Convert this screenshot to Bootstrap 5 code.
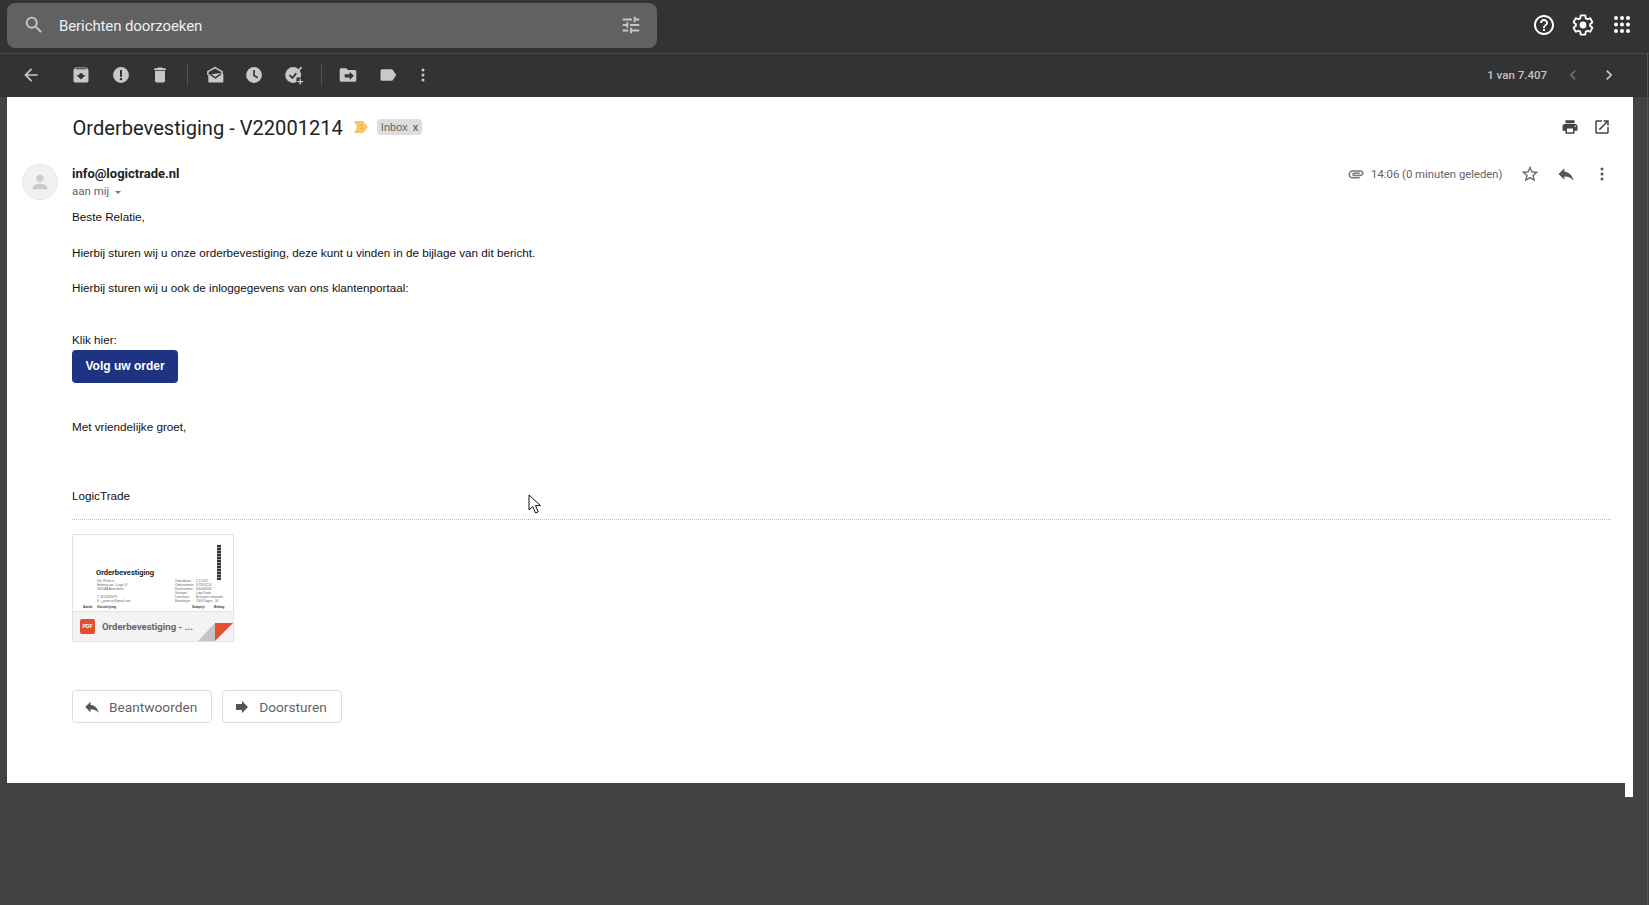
<!DOCTYPE html>
<html lang="nl">
<head>
  <meta charset="UTF-8" />
  <title>Orderbevestiging - V22001214</title>
  <link href="https://cdn.jsdelivr.net/npm/bootstrap@5.3.0/dist/css/bootstrap.min.css" rel="stylesheet"/>
  <style>
    html, body { height: 100%; }
    body {
      background: #424242;
      font-family: "Liberation Sans", Arial, sans-serif;
      overflow: hidden;
      height: 905px;
    }
    /* thin lighter edge on the right of the window */
    body::after {
      content: "";
      position: fixed;
      top: 53px;
      right: 1px;
      bottom: 0;
      width: 1px;
      background: #555;
    }

    /* top bars */
    .top-head {
      height: 54px;
      background: #333;
      border-bottom: 1px solid #4a4a4a;
      padding: 3px 10px 6px 7px;
    }
    .search-box {
      width: 650px;
      height: 45px;
      background: #616161;
      border-radius: 8px;
      padding: 0 7px 0 16px;
      color: #eee;
      font: 15px/45px Roboto, sans-serif;
    }
    .search-text { margin-left: 14px; padding-top: 2px; letter-spacing: -.1px; }
    .head-icons { gap: 15px; padding-right: 5px; }
    .tool-bar {
      height: 43px;
      background: #333;
      padding: 0 30px 2px 11px;
    }
    .tool-slot { width: 39.5px; height: 38px; flex: none; }
    .back-slot { margin-right: 11px; }
    .more-slot { margin-left: -4px; }
    .tool-sep { width: 1px; height: 20px; background: #555; flex: none; margin: 0 8px 0 7px; }
    .tool-sep + .tool-slot { margin-left: -1px; }
    .pager { color: #c4c4c4; font: 500 11.5px Roboto, sans-serif; }
    .pager-arrows { gap: 16px; margin-left: 16px; }
    .ico-light { fill: #c8c8c8; }
    .ico-white { fill: #fff; }
    .ico-dark { fill: #444; }
    .ico-mid { fill: #555; }

    /* mail panel */
    .mail-panel {
      position: relative;
      width: 1626px;
      height: 686px;
      margin-left: 7px;
      background: #fff;
      color: #202124;
    }
    .mail-panel::after {
      content: "";
      position: absolute;
      right: 0;
      top: 100%;
      width: 8px;
      height: 14px;
      background: #fff;
    }
    .subject-row { height: 60px; padding: 0 22px 0 65.5px; }
    .subject-text { font: 400 20.1px Roboto, sans-serif; margin: 0; padding-top: 2px; color: #222; }
    .marker { margin: 0 9px 0 11px; }
    .inbox-tag {
      background: #ddd;
      color: #666;
      border-radius: 4px;
      font: 11px/16px "Liberation Sans", sans-serif;
      padding: 0 4px;
    }
    .tag-close { color: #444; margin-left: 2px; }
    .subject-tools { gap: 14px; }
    .sender-row { height: 50px; padding: 0 13.5px 0 15px; }
    .avatar-round {
      width: 36px;
      height: 36px;
      border-radius: 50%;
      background: #f1f1f1;
      border: 1px solid #e8e8e8;
      margin-right: 14px;
    }
    .sender-name { font: 700 13px/18px Roboto, sans-serif; color: #222; }
    .sender-to { font: 11.5px/16px Roboto, sans-serif; color: #5f6368; }
    .caret-down {
      display: inline-block;
      border: 3.5px solid transparent;
      border-top-color: #777;
      border-bottom: 0;
      margin-left: 3px;
      vertical-align: 1px;
    }
    .meta-date { font: 11.3px Roboto, sans-serif; color: #5f6368; margin: 0 9px 0 6px; }
    .meta-slot { width: 36px; text-align: center; }

    .mail-body { margin-left: 65px; margin-right: 22px; font-size: 11.7px; line-height: 17.75px; color: #111; padding-top: 1px; }
    .mail-body p { margin: 0 0 17.75px; }
    .mail-body .greet-line { margin: 35px 0 48px; }
    .sign-line { padding-top: 2.5px; }
    .order-btn {
      display: inline-block;
      margin-top: 2px;
      background: #1e3382;
      color: #fff;
      font-weight: 700;
      font-size: 12px;
      line-height: 33px;
      padding: 0 13.5px;
      border-radius: 4px;
      text-decoration: none;
    }
    .dot-line { border-top: 1px dotted #bbb; height: 0; margin-top: 15px; }

    /* attachment */
    .attach-card {
      position: relative;
      width: 162px;
      height: 108px;
      margin: 14px 0 0 65px;
      border: 1px solid #e3e3e3;
      background: #fff;
      overflow: hidden;
    }
    .thumb-title { position: absolute; left: 23px; top: 33px; font: 700 7.5px Roboto, sans-serif; color: #222; }
    .thumb-line { position: absolute; font: 3px/4px "Liberation Sans", sans-serif; color: #666; white-space: nowrap; }
    .thumb-addr { left: 24px; top: 44px; }
    .thumb-keys { left: 102px; top: 44px; }
    .thumb-vals { left: 123px; top: 44px; }
    .thumb-head { top: 70px; font-weight: 700; color: #333; }
    .col-qty { left: 10px; }
    .col-desc { left: 24px; }
    .col-price { left: 119px; }
    .col-sum { left: 141px; }
    .thumb-bar {
      position: absolute; left: 144px; top: 10px; width: 4px; height: 35px;
      background: repeating-linear-gradient(#333 0 2px, #999 2px 3px);
    }
    .attach-foot {
      position: absolute;
      left: 0; right: 0; bottom: 0;
      height: 30px;
      background: #f3f3f3;
      border-top: 1px solid #e3e3e3;
      padding-left: 7px;
      font: 700 9.6px/30px Roboto, sans-serif;
      color: #666;
    }
    .pdf-mark {
      width: 15px; height: 15px; background: #e34f33; border-radius: 2px; margin-right: 7px;
      color: #fff; font: 700 5px/15px "Liberation Sans", sans-serif; text-align: center;
    }
    .page-curl { position: absolute; right: 0; bottom: 0; }

    /* reply buttons */
    .reply-row { margin: 48px 0 0 65px; gap: 10px; }
    .reply-btn {
      height: 33px;
      border: 1px solid #dadce0;
      border-radius: 4px;
      background: #fff;
      color: #5f6368;
      font: 400 13.7px Roboto, sans-serif;
      padding: 0 14px 0 10px;
      gap: 8px;
    }
    .cursor-mark { position: absolute; left: 521px; top: 397px; }
  </style>
</head>
<body>

<div class="top-head d-flex align-items-center justify-content-between">
  <div class="search-box d-flex align-items-center">
    <svg class="ico-light" width="22" height="22" viewBox="0 0 24 24"><path d="M15.500 14h-.79l-.28-.27A6.471 6.471 0 0 0 16 9.500 6.500 6.500 0 1 0 9.500 16c1.610 0 3.090-.59 4.230-1.570l.27.28v.79l5 4.990L20.490 19l-4.990-5zm-6 0C7.010 14 5 11.990 5 9.500S7.010 5 9.500 5 14 7.010 14 9.500 11.990 14 9.500 14z"/></svg>
    <span class="search-text flex-grow-1">Berichten doorzoeken</span>
    <svg class="ico-light me-2" width="22" height="22" viewBox="0 0 24 24"><path d="M3 17v2h6v-2H3zM3 5v2h10V5H3zm10 16v-2h8v-2h-8v-2h-2v6h2zM7 9v2H3v2h4v2h2V9H7zm14 4v-2H11v2h10zm-6-4h2V7h4V5h-4V3h-2v6z"/></svg>
  </div>
  <div class="head-icons d-flex align-items-center">
    <svg class="ico-white" width="24" height="24" viewBox="0 0 24 24"><path d="M11 18h2v-2h-2v2zm1-16C6.480 2 2 6.480 2 12s4.480 10 10 10 10-4.480 10-10S17.520 2 12 2zm0 18c-4.410 0-8-3.590-8-8s3.590-8 8-8 8 3.590 8 8-3.590 8-8 8zm0-14c-2.210 0-4 1.790-4 4h2c0-1.100.9-2 2-2s2 .9 2 2c0 2-3 1.750-3 5h2c0-2.250 3-2.500 3-5 0-2.210-1.790-4-4-4z"/></svg>
    <svg width="24" height="24" viewBox="0 0 24 24"><path fill="none" stroke="#fff" stroke-width="1.900" d="M19.140 12.940c.04-.3.06-.61.06-.94 0-.32-.02-.64-.07-.94l2.030-1.580a.49.49 0 0 0 .12-.61l-1.920-3.320a.488.488 0 0 0-.59-.22l-2.390.96c-.5-.38-1.030-.7-1.620-.94l-.36-2.540a.484.484 0 0 0-.48-.41h-3.840c-.24 0-.43.17-.47.41l-.36 2.540c-.59.24-1.130.57-1.620.94l-2.390-.96c-.22-.08-.47 0-.59.22L2.740 8.870c-.12.21-.08.47.12.61l2.030 1.580c-.05.3-.09.63-.09.94s.02.64.07.94l-2.030 1.580a.49.49 0 0 0-.12.61l1.920 3.320c.12.22.37.29.59.22l2.390-.96c.5.38 1.030.7 1.620.94l.36 2.540c.05.24.24.41.48.41h3.840c.24 0 .44-.17.47-.41l.36-2.540c.59-.24 1.130-.56 1.620-.94l2.390.96c.22.08.47 0 .59-.22l1.920-3.320c.12-.22.07-.47-.12-.61l-2.010-1.580z"/><circle cx="12" cy="12" r="3.400" fill="#fff"/></svg>
    <svg class="ico-white" width="24" height="24" viewBox="0 0 24 24"><circle cx="6" cy="5" r="2"/><circle cx="12" cy="5" r="2"/><circle cx="18" cy="5" r="2"/><circle cx="6" cy="11.500" r="2"/><circle cx="12" cy="11.500" r="2"/><circle cx="18" cy="11.500" r="2"/><circle cx="6" cy="18" r="2"/><circle cx="12" cy="18" r="2"/><circle cx="18" cy="18" r="2"/></svg>
  </div>
</div>

<div class="tool-bar d-flex align-items-center">
  <div class="tool-slot back-slot d-flex align-items-center justify-content-center"><svg class="ico-light" width="20" height="20" viewBox="0 0 24 24"><path d="M20 11H7.830l5.590-5.590L12 4l-8 8 8 8 1.410-1.410L7.830 13H20v-2z"/></svg></div>
  <div class="tool-slot d-flex align-items-center justify-content-center"><svg class="ico-light" width="20" height="20" viewBox="0 0 24 24"><path d="M20.540 5.230l-1.390-1.680C18.880 3.210 18.470 3 18 3H6c-.47 0-.88.21-1.160.55L3.460 5.230C3.170 5.570 3 6.020 3 6.500V19c0 1.100.9 2 2 2h14c1.100 0 2-.9 2-2V6.500c0-.48-.17-.93-.46-1.270zM12 17.500L6.500 12H10v-2h4v2h3.500L12 17.500zM5.120 5l.81-1h12l.94 1H5.120z"/></svg></div>
  <div class="tool-slot d-flex align-items-center justify-content-center"><svg width="20" height="20" viewBox="0 0 24 24"><circle cx="12" cy="12" r="9.500" fill="#c8c8c8"/><path fill="#333" d="M10.800 6h2.400v8h-2.400z"/><circle cx="12" cy="16.800" r="1.500" fill="#333"/></svg></div>
  <div class="tool-slot d-flex align-items-center justify-content-center"><svg class="ico-light" width="20" height="20" viewBox="0 0 24 24"><path d="M6 19c0 1.100.9 2 2 2h8c1.100 0 2-.9 2-2V7H6v12zM19 4h-3.500l-1-1h-5l-1 1H5v2h14V4z"/></svg></div>
  <div class="tool-sep"></div>
  <div class="tool-slot d-flex align-items-center justify-content-center"><svg width="20" height="20" viewBox="0 0 24 24"><path fill="none" stroke="#c8c8c8" stroke-width="1.800" d="M3.500 12V8L12 3l8.500 5v2"/><path fill="#c8c8c8" d="M4 11.500 20 9.500l2 1V20a1 1 0 0 1-1 1H5a1 1 0 0 1-1-1z"/><path fill="none" stroke="#333" stroke-width="1.800" d="M6 11l6.500 4.500L19 11"/></svg></div>
  <div class="tool-slot d-flex align-items-center justify-content-center"><svg width="20" height="20" viewBox="0 0 24 24"><circle cx="12" cy="12" r="9.500" fill="#c8c8c8"/><path fill="none" stroke="#333" stroke-width="2" d="M12 6v6.500l4.500 2.700"/></svg></div>
  <div class="tool-slot d-flex align-items-center justify-content-center"><svg width="20" height="20" viewBox="0 0 24 24"><circle cx="11" cy="12" r="9.500" fill="#c8c8c8"/><path fill="none" stroke="#333" stroke-width="2" d="M6.500 12l3.500 3.500 6-7"/><path fill="none" stroke="#c8c8c8" stroke-width="2" d="M14.500 10 21 2.500"/><path fill="#333" d="M15 15h9v9h-9z"/><path fill="#c8c8c8" d="M18.700 16.500h1.600v2.700H23v1.600h-2.700v2.700h-1.600v-2.700H16v-1.600h2.700z"/></svg></div>
  <div class="tool-sep"></div>
  <div class="tool-slot d-flex align-items-center justify-content-center"><svg class="ico-light" width="20" height="20" viewBox="0 0 24 24"><path d="M20 6h-8l-2-2H4c-1.100 0-2 .9-2 2v12c0 1.100.9 2 2 2h16c1.100 0 2-.9 2-2V8c0-1.100-.9-2-2-2zm-6 12v-3H8v-4h6V8l5 5-5 5z"/></svg></div>
  <div class="tool-slot d-flex align-items-center justify-content-center"><svg class="ico-light" width="20" height="20" viewBox="0 0 24 24"><path d="M17.630 5.840C17.270 5.330 16.670 5 16 5L5 5.010C3.900 5.010 3 5.900 3 7v10c0 1.100.9 1.990 2 1.990L16 19c.67 0 1.270-.33 1.630-.84L22 12l-4.370-6.160z"/></svg></div>
  <div class="tool-slot more-slot d-flex align-items-center justify-content-center"><svg class="ico-light" width="20" height="20" viewBox="0 0 24 24"><circle cx="12" cy="6" r="1.800"/><circle cx="12" cy="12" r="1.800"/><circle cx="12" cy="18" r="1.800"/></svg></div>
  <div class="pager ms-auto">1 van 7.407</div>
  <div class="pager-arrows d-flex align-items-center">
    <svg width="20" height="20" viewBox="0 0 24 24" fill="#6f6f6f"><path d="M15.410 7.410 14 6l-6 6 6 6 1.410-1.410L10.830 12z"/></svg>
    <svg width="20" height="20" viewBox="0 0 24 24" fill="#c8c8c8"><path d="M8.590 16.590 10 18l6-6-6-6-1.410 1.410L13.170 12z"/></svg>
  </div>
</div>

<div class="mail-panel">
  <div class="subject-row d-flex align-items-center">
    <h1 class="subject-text">Orderbevestiging - V22001214</h1>
    <svg class="marker" width="14" height="12" viewBox="0 0 14 12"><path fill="#fdc46a" d="M0 0h9l5 6-5 6H0l3-6z"/><circle cx="7.500" cy="4.500" r=".7" fill="#c08f3a"/><circle cx="7.500" cy="7.500" r=".7" fill="#c08f3a"/></svg>
    <span class="inbox-tag">Inbox <span class="tag-close">x</span></span>
    <div class="subject-tools ms-auto d-flex align-items-center">
      <svg class="ico-dark" width="18" height="18" viewBox="0 0 24 24"><path d="M19 8H5c-1.660 0-3 1.340-3 3v6h4v4h12v-4h4v-6c0-1.660-1.340-3-3-3zm-3 11H8v-5h8v5zm3-7c-.55 0-1-.45-1-1s.45-1 1-1 1 .45 1 1-.45 1-1 1zm-1-9H6v4h12V3z"/></svg>
      <svg class="ico-dark" width="18" height="18" viewBox="0 0 24 24"><path d="M19 19H5V5h7V3H5c-1.110 0-2 .9-2 2v14c0 1.100.89 2 2 2h14c1.100 0 2-.9 2-2v-7h-2v7zM14 3v2h3.590l-9.830 9.830 1.410 1.410L19 6.410V10h2V3h-7z"/></svg>
    </div>
  </div>

  <div class="sender-row d-flex align-items-center">
    <div class="avatar-round d-flex align-items-center justify-content-center">
      <svg width="22" height="22" viewBox="0 0 24 24" fill="#ccc"><path d="M12 12c2.210 0 4-1.790 4-4s-1.790-4-4-4-4 1.790-4 4 1.790 4 4 4zm0 2c-2.670 0-8 1.340-8 4v2h16v-2c0-2.660-5.330-4-8-4z"/></svg>
    </div>
    <div>
      <div class="sender-name">info@logictrade.nl</div>
      <div class="sender-to">aan mij <span class="caret-down"></span></div>
    </div>
    <div class="ms-auto mb-3 d-flex align-items-center">
      <svg width="18" height="18" viewBox="0 0 24 24" fill="#777"><path d="M2 12.500C2 9.460 4.460 7 7.500 7H18c2.210 0 4 1.790 4 4s-1.790 4-4 4H9.500C8.120 15 7 13.880 7 12.500S8.120 10 9.500 10H17v2H9.410c-.55 0-.55 1 0 1H18c1.100 0 2-.9 2-2s-.9-2-2-2H7.500C5.570 9 4 10.570 4 12.500S5.570 16 7.500 16H17v2H7.500C4.460 18 2 15.540 2 12.500z"/></svg>
      <span class="meta-date">14:06 (0 minuten geleden)</span>
      <span class="meta-slot d-flex justify-content-center"><svg width="20" height="20" viewBox="0 0 24 24" fill="#666"><path d="M22 9.240l-7.190-.62L12 2 9.190 8.630 2 9.240l5.460 4.730L5.820 21 12 17.270 18.180 21l-1.630-7.030L22 9.240zM12 15.400l-3.760 2.270 1-4.280-3.320-2.880 4.380-.38L12 6.100l1.710 4.040 4.380.38-3.320 2.880 1 4.280L12 15.400z"/></svg></span>
      <span class="meta-slot d-flex justify-content-center"><svg class="ico-mid" width="20" height="20" viewBox="0 0 24 24"><path d="M10 9V5l-7 7 7 7v-4.100c5 0 8.500 1.600 11 5.100-1-5-4-10-11-11z"/></svg></span>
      <span class="meta-slot d-flex justify-content-center"><svg class="ico-mid" width="20" height="20" viewBox="0 0 24 24"><circle cx="12" cy="6" r="1.800"/><circle cx="12" cy="12" r="1.800"/><circle cx="12" cy="18" r="1.800"/></svg></span>
    </div>
  </div>

  <div class="mail-body">
    <p>Beste Relatie,</p>
    <p>Hierbij sturen wij u onze orderbevestiging, deze kunt u vinden in de bijlage van dit bericht.</p>
    <p>Hierbij sturen wij u ook de inloggegevens van ons klantenportaal:</p>
    <div class="pt-3 mt-3">Klik hier:</div>
    <a class="order-btn" href="#">Volg uw order</a>
    <p class="greet-line">Met vriendelijke groet,</p>
    <div class="sign-line">LogicTrade</div>
    <div class="dot-line"></div>
  </div>

  <div class="attach-card">
    <div class="thumb-title">Orderbevestiging</div>
    <div class="thumb-bar"></div>
    <div class="thumb-line thumb-addr">Dhr. Pieterse<br>Herberg van 't Lage 14<br>9000 AA Amersfoort<br><br>T. 0612345678<br>E. j_pieterse@gmail.com</div>
    <div class="thumb-line thumb-keys">Orderdatum<br>Ordernummer<br>Klantnummer<br>Verkoper<br>Leverwijze<br>Betaalwijze</div>
    <div class="thumb-line thumb-vals">1-2-2022<br>V22001214<br>D00003234<br>LogicTrade<br>Bezorgen Limonade<br>7000 Dagen - 30</div>
    <div class="thumb-line thumb-head col-qty">Aantal</div>
    <div class="thumb-line thumb-head col-desc">Omschrijving</div>
    <div class="thumb-line thumb-head col-price">Stukprijs</div>
    <div class="thumb-line thumb-head col-sum">Bedrag</div>
    <div class="attach-foot d-flex align-items-center">
      <span class="pdf-mark">PDF</span>Orderbevestiging - ...
    </div>
    <svg class="page-curl" width="36" height="19" viewBox="0 0 36 19"><path fill="#c4c4c4" d="M1 19 18 1h0v18z"/><path fill="#e34f33" d="M18 1h18L18 19z"/></svg>
  </div>

  <div class="reply-row d-flex">
    <div class="reply-btn d-flex align-items-center">
      <svg width="18" height="18" viewBox="0 0 24 24" fill="#555"><path d="M10 9V5l-7 7 7 7v-4.100c5 0 8.500 1.600 11 5.100-1-5-4-10-11-11z"/></svg>
      <span>Beantwoorden</span>
    </div>
    <div class="reply-btn d-flex align-items-center">
      <svg width="18" height="18" viewBox="0 0 24 24" fill="#555"><path d="M12 8V4l8 8-8 8v-4H4V8z"/></svg>
      <span>Doorsturen</span>
    </div>
  </div>

  <svg class="cursor-mark" width="14" height="21" viewBox="0 0 14 21"><path fill="#fff" stroke="#111" d="M1 1v15l3.800-3.400 2.700 6.400 2.700-1.200-2.700-6.200h5z"/></svg>
</div>

</body>
</html>
